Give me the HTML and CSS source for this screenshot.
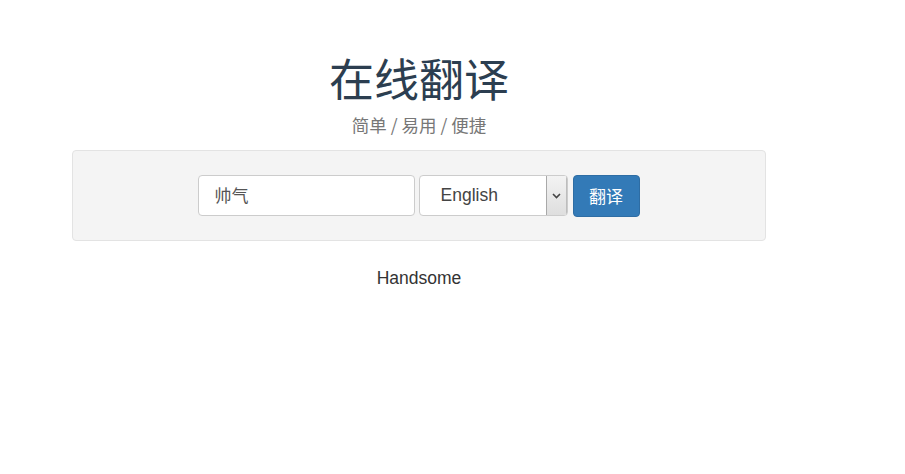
FILE: index.html
```html
<!DOCTYPE html>
<html lang="zh-CN">
<head>
<meta charset="utf-8">
<title>在线翻译</title>
<link rel="stylesheet" href="styles.css">
</head>
<body>
<main class="page">
  <header class="header">
    <h1 class="title">在线翻译</h1>
    <p class="subtitle">简单 / 易用 / 便捷</p>
  </header>
  <section class="well">
    <form class="form">
      <div class="input">帅气</div>
      <div class="select">
        <span class="select-value">English</span>
        <span class="select-arrow">
          <svg width="9" height="6" viewBox="0 0 9 6"><path d="M1 1 L4.5 4.5 L8 1" fill="none" stroke="#444" stroke-width="1.6"/></svg>
        </span>
      </div>
      <button type="button" class="btn">翻译</button>
    </form>
  </section>
  <p class="result">Handsome</p>
</main>
</body>
</html>
```
FILE: styles.css
```css
* { box-sizing: border-box; }
html, body { margin: 0; padding: 0; background: #fff; }
body {
  font-family: "Liberation Sans", "Noto Sans CJK SC", sans-serif;
  color: #333;
}
.page {
  width: 694px;
  margin-left: 72px;
}
.header {
  padding-top: 48px;
  text-align: center;
}
.title {
  margin: 0;
  font-family: "Noto Sans CJK SC", sans-serif;
  font-weight: 400;
  font-size: 45px;
  line-height: 60px;
  color: #2c3e50;
}
.subtitle {
  margin: 4px 0 0;
  font-family: "Noto Sans CJK SC", sans-serif;
  font-size: 17.5px;
  line-height: 26px;
  color: #777;
}
.well {
  margin-top: 12px;
  height: 91px;
  background: #f4f4f4;
  border: 1px solid #e3e3e3;
  border-radius: 4px;
  display: flex;
  align-items: center;
  justify-content: center;
}
.form {
  display: flex;
  align-items: center;
  padding-right: 1px;
}
.input {
  width: 217px;
  height: 41px;
  padding: 0 16px;
  background: #fff;
  border: 1px solid #ccc;
  border-radius: 4px;
  font-family: "Noto Sans CJK SC", sans-serif;
  font-size: 17px;
  line-height: 38px;
  color: #555;
}
.select {
  margin-left: 4px;
  width: 149px;
  height: 41px;
  display: flex;
  background: #fff;
  border: 1px solid #ccc;
  border-radius: 4px;
  overflow: hidden;
}
.select-value {
  flex: 1;
  padding-left: 21px;
  font-size: 17.5px;
  line-height: 39px;
  color: #444;
}
.select-arrow {
  width: 21px;
  display: flex;
  align-items: center;
  justify-content: center;
  background: linear-gradient(#f3f3f3, #dedede);
  border-left: 1px solid #a9a9a9;
  border-right: 1px solid #bdbdbd;
}
.btn {
  margin-left: 5px;
  width: 67px;
  height: 42px;
  padding: 0;
  background: #337ab7;
  border: 1px solid #2e6da4;
  border-radius: 4px;
  color: #fff;
  font-family: "Noto Sans CJK SC", sans-serif;
  font-size: 17px;
  line-height: 40px;
}
.result {
  margin: 26px 0 0;
  text-align: center;
  font-size: 17.5px;
  line-height: 22px;
  color: #333;
}
```
